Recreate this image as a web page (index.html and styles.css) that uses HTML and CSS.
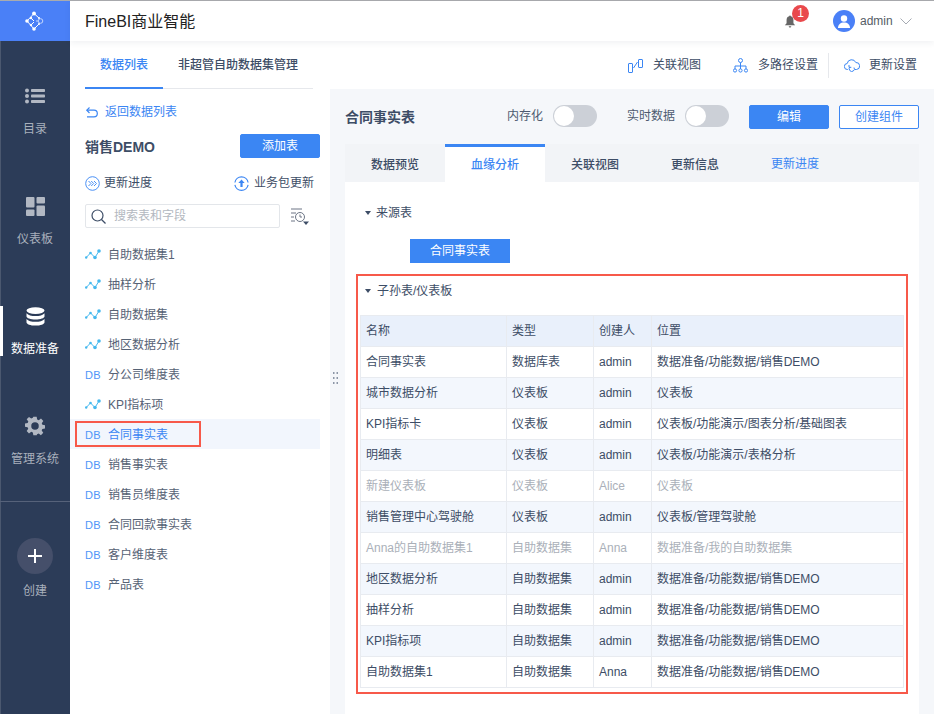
FILE: index.html
```html
<!DOCTYPE html>
<html lang="zh">
<head>
<meta charset="utf-8">
<title>FineBI商业智能</title>
<link rel="stylesheet" href="styles.css">
</head>
<body>
<div class="app">
  <aside class="side">
    <div class="logo">
      <svg width="20" height="20" viewBox="0 0 20 20" fill="none" stroke="#fff" stroke-width="1"><path d="M2 10 9 2.500 14 7M2 10l7 8 5-5M9 10l-3-3M9 11l-3 3"/><circle cx="15.500" cy="10" r="2.300" stroke="#c4d6fc"/><path d="M11 10h2" stroke="#c4d6fc"/><g fill="#fff" stroke="none"><circle cx="2" cy="10" r="1.800"/><circle cx="9" cy="2.500" r="1.900"/><circle cx="9" cy="18" r="1.800"/><circle cx="6" cy="7" r="1.200"/><circle cx="6" cy="14" r="1.200"/><circle cx="14" cy="7" r="1"/><circle cx="14" cy="13" r="1"/></g></svg>
    </div>
    <nav class="nav">
      <a class="nav-item">
        <svg class="m2" width="20" height="16" viewBox="0 0 20 16" fill="#dfe2e7"><circle cx="2" cy="2.500" r="2"/><circle cx="2" cy="8" r="2"/><circle cx="2" cy="13.500" r="2"/><rect x="6" y="1" width="14" height="3" rx=".8"/><rect x="6" y="6.500" width="14" height="3" rx=".8"/><rect x="6" y="12" width="14" height="3" rx=".8"/></svg>
        <span>目录</span>
      </a>
      <a class="nav-item">
        <svg class="m1" width="19" height="19" viewBox="0 0 19 19" fill="#dfe2e7"><rect width="8.500" height="10.500" rx="1"/><rect y="12.500" width="8.500" height="6.500" rx="1"/><rect x="10.500" width="8.500" height="6.500" rx="1"/><rect x="10.500" y="8.500" width="8.500" height="10.500" rx="1"/></svg>
        <span>仪表板</span>
      </a>
      <a class="nav-item active">
        <svg class="m1" width="19" height="19" viewBox="0 0 19 19" fill="#fff"><ellipse cx="9.500" cy="3.600" rx="9" ry="3.400"/><path d="M.5 6.200c1.600 2 5 2.800 9 2.800s7.400-.8 9-2.800v3c0 1.900-4 3.300-9 3.300s-9-1.400-9-3.300z"/><path d="M.5 12c1.600 2 5 2.800 9 2.800s7.400-.8 9-2.800v3.200c0 2-4 3.400-9 3.400s-9-1.400-9-3.400z"/></svg>
        <span>数据准备</span>
      </a>
      <a class="nav-item">
        <svg width="20" height="20" viewBox="0 0 24 24" fill="#dfe2e7"><path fill-rule="evenodd" d="M10 1h4l.6 3.200 1.900.8 2.700-1.900 2.800 2.800-1.900 2.700.8 1.900 3.100.5v4l-3.200.6-.8 1.900 1.900 2.700-2.800 2.800-2.700-1.900-1.900.8L14 23h-4l-.6-3.200-1.900-.8-2.700 1.900L2 18.100l1.900-2.700-.8-1.900L0 13v-4l3.200-.5.800-1.900L2 3.900 4.800 1.100l2.700 1.900 1.900-.8zM12 7.500a4.500 4.500 0 1 0 0 9 4.500 4.500 0 0 0 0-9z"/></svg>
        <span>管理系统</span>
      </a>
    </nav>
    <div class="create">
      <div class="plus"><svg width="14" height="14" viewBox="0 0 14 14" fill="#fff"><rect x="6" width="2" height="14"/><rect y="6" width="14" height="2"/></svg></div>
      <span>创建</span>
    </div>
  </aside>

  <div class="main">
    <header class="top">
      <h1 class="brand">FineBI商业智能</h1>
      <div class="top-right">
        <div class="bell">
          <svg width="12" height="13" viewBox="0 0 14 14" fill="#666"><path d="M7 0c.7 0 1 .5 1 1 2 .5 3 2.200 3 4.300V9l2 2.500H1L3 9V5.300C3 3.200 4 1.500 6 1c0-.5.3-1 1-1zM5.500 12.500h3C8.400 13.400 7.800 14 7 14s-1.400-.6-1.500-1.500z"/></svg>
          <b class="badge">1</b>
        </div>
        <div class="avatar"><svg width="12" height="13" viewBox="0 0 12 13" fill="#fff"><circle cx="6" cy="3.500" r="3.200"/><path d="M0 13c0-3.500 2.500-5.500 6-5.500s6 2 6 5.500z"/></svg></div>
        <span class="uname">admin</span>
        <svg class="chev" width="12" height="7" viewBox="0 0 12 7" fill="none" stroke="#a6abb3"><path d="M.5.500 6 6l5.500-5.500"/></svg>
      </div>
    </header>

    <div class="subbar">
      <div class="subtabs">
        <a class="subtab on">数据列表</a>
        <a class="subtab">非超管自助数据集管理</a>
      </div>
      <div class="tools">
        <a class="tool t1"><svg width="15" height="15" viewBox="0 0 15 15" fill="none" stroke="#3b86f3"><rect x=".5" y="5.500" width="4" height="9" rx=".5"/><rect x="10.500" y="1.500" width="4" height="8" rx=".5"/><path d="M5.500 10 9.500 4"/></svg>关联视图</a>
        <a class="tool t2"><svg width="15" height="15" viewBox="0 0 15 15" fill="none" stroke="#3b86f3"><circle cx="7.500" cy="2.500" r="2"/><circle cx="2" cy="12.500" r="1.600"/><circle cx="7.500" cy="12.500" r="1.600"/><circle cx="13" cy="12.500" r="1.600"/><path d="M7.500 4.500v6.500M2 11V8h11v3"/></svg>多路径设置</a>
        <a class="tool t3"><svg width="16" height="13" viewBox="0 0 16 13" fill="none" stroke="#3b86f3"><path d="M4 10.500H3.500a3 3 0 0 1-.3-6A4.500 4.500 0 0 1 11.800 3.500 3.500 3.500 0 0 1 12.500 10.500H11"/><path d="M10 8.500a2.600 2.600 0 1 1-4-.5M5 6v2.300h2.300"/></svg>更新设置</a>
      </div>
    </div>

    <div class="body">
      <section class="left">
        <a class="back"><svg width="12" height="11" viewBox="0 0 12 11" fill="none" stroke="#3b86f3" stroke-width="1.200"><path d="M.8 3.200H8a3.300 3.300 0 0 1 0 6.600H1"/><path d="M3.500.5.800 3.200 3.500 6"/></svg>返回数据列表</a>
        <div class="pack">
          <h2>销售DEMO</h2>
          <button class="btn solid">添加表</button>
        </div>
        <div class="actions">
          <a class="act progress"><svg width="15" height="15" viewBox="0 0 15 15" fill="none" stroke="#4a90f5"><circle cx="7.500" cy="7.500" r="6.800"/><path d="m3.500 5 2.500 2.500L3.500 10M6.200 5l2.500 2.500L6.200 10M9 5l2.500 2.500L9 10"/></svg>更新进度</a>
          <a class="act"><svg width="15" height="15" viewBox="0 0 15 15" fill="none" stroke="#3b86f3" stroke-width="1.200"><path d="M.9 6.500A6.700 6.700 0 0 1 14.100 6.500M14.100 8.800A6.700 6.700 0 0 1 .9 8.800"/><path d="m7.500 3.500 3.200 3.600H8.600v4H6.400v-4H4.300z" fill="#3b86f3" stroke="none"/></svg>业务包更新</a>
        </div>
        <div class="searchrow">
          <label class="search">
            <svg width="15" height="15" viewBox="0 0 15 15" fill="none" stroke="#3d4d66" stroke-width="1.200"><circle cx="6.500" cy="6.500" r="5.500"/><path d="m10.500 10.500 4 4"/></svg>
            <input type="text" placeholder="搜索表和字段">
          </label>
          <svg class="filter" width="19" height="18" viewBox="0 0 19 18" fill="none" stroke="#6c7585"><path d="M1 2h11M1 6h5M1 10h3M1 14h4"/><circle cx="10" cy="10" r="4.500"/><path d="M10 7.500V10h2"/><path d="M13 14.500h6L16 18z" fill="#3d4d66" stroke="none"/></svg>
        </div>
        <ul class="list">
          <li class="row"><span class="item"><svg class="ic" width="16" height="13" viewBox="0 0 16 13"><path d="M1.200 8.500 5.500 4 10 8.500 14 2" fill="none" stroke="#45b8ee"/><g fill="#45b8ee"><circle cx="1.200" cy="8.500" r="1.200"/><circle cx="5.500" cy="4" r="1.300"/><circle cx="10" cy="8.500" r="1.800"/><circle cx="14" cy="2" r="1.800"/></g></svg>自助数据集1</span></li>
          <li class="row"><span class="item"><svg class="ic" width="16" height="13" viewBox="0 0 16 13"><path d="M1.200 8.500 5.500 4 10 8.500 14 2" fill="none" stroke="#45b8ee"/><g fill="#45b8ee"><circle cx="1.200" cy="8.500" r="1.200"/><circle cx="5.500" cy="4" r="1.300"/><circle cx="10" cy="8.500" r="1.800"/><circle cx="14" cy="2" r="1.800"/></g></svg>抽样分析</span></li>
          <li class="row"><span class="item"><svg class="ic" width="16" height="13" viewBox="0 0 16 13"><path d="M1.200 8.500 5.500 4 10 8.500 14 2" fill="none" stroke="#45b8ee"/><g fill="#45b8ee"><circle cx="1.200" cy="8.500" r="1.200"/><circle cx="5.500" cy="4" r="1.300"/><circle cx="10" cy="8.500" r="1.800"/><circle cx="14" cy="2" r="1.800"/></g></svg>自助数据集</span></li>
          <li class="row"><span class="item"><svg class="ic" width="16" height="13" viewBox="0 0 16 13"><path d="M1.200 8.500 5.500 4 10 8.500 14 2" fill="none" stroke="#45b8ee"/><g fill="#45b8ee"><circle cx="1.200" cy="8.500" r="1.200"/><circle cx="5.500" cy="4" r="1.300"/><circle cx="10" cy="8.500" r="1.800"/><circle cx="14" cy="2" r="1.800"/></g></svg>地区数据分析</span></li>
          <li class="row"><span class="item"><i class="db">DB</i>分公司维度表</span></li>
          <li class="row"><span class="item"><svg class="ic" width="16" height="13" viewBox="0 0 16 13"><path d="M1.200 8.500 5.500 4 10 8.500 14 2" fill="none" stroke="#45b8ee"/><g fill="#45b8ee"><circle cx="1.200" cy="8.500" r="1.200"/><circle cx="5.500" cy="4" r="1.300"/><circle cx="10" cy="8.500" r="1.800"/><circle cx="14" cy="2" r="1.800"/></g></svg>KPI指标项</span></li>
          <li class="row sel"><span class="item"><i class="db">DB</i>合同事实表</span></li>
          <li class="row"><span class="item"><i class="db">DB</i>销售事实表</span></li>
          <li class="row"><span class="item"><i class="db">DB</i>销售员维度表</span></li>
          <li class="row"><span class="item"><i class="db">DB</i>合同回款事实表</span></li>
          <li class="row"><span class="item"><i class="db">DB</i>客户维度表</span></li>
          <li class="row"><span class="item"><i class="db">DB</i>产品表</span></li>
        </ul>
      </section>

      <section class="right">
        <svg class="grip" width="5" height="12" viewBox="0 0 5 12" fill="#8d97a7"><rect width="1.500" height="2"/><rect y="5" width="1.500" height="2"/><rect y="10" width="1.500" height="2"/><rect x="3.500" width="1.500" height="2"/><rect x="3.500" y="5" width="1.500" height="2"/><rect x="3.500" y="10" width="1.500" height="2"/></svg>
        <div class="head">
          <h2>合同事实表</h2>
          <div class="head-ctl">
            <span class="sw-label">内存化</span><span class="switch"></span>
            <span class="sw-label second">实时数据</span><span class="switch"></span>
            <button class="btn solid edit">编辑</button>
            <button class="btn ghost">创建组件</button>
          </div>
        </div>
        <div class="tabs">
          <a class="tab">数据预览</a>
          <a class="tab on">血缘分析</a>
          <a class="tab">关联视图</a>
          <a class="tab">更新信息</a>
          <a class="tab link">更新进度</a>
        </div>
        <div class="panel">
          <div class="sec src"><i class="tri"></i>来源表</div>
          <div class="node">合同事实表</div>
          <div class="redbox">
            <div class="sec kids"><i class="tri"></i>子孙表/仪表板</div>
            <table class="grid">
              <colgroup><col class="c1"><col class="c2"><col class="c3"><col class="c4"></colgroup>
              <thead><tr><th>名称</th><th>类型</th><th>创建人</th><th>位置</th></tr></thead>
              <tbody>
                <tr><td>合同事实表</td><td>数据库表</td><td>admin</td><td>数据准备/功能数据/销售DEMO</td></tr>
                <tr><td>城市数据分析</td><td>仪表板</td><td>admin</td><td>仪表板</td></tr>
                <tr><td>KPI指标卡</td><td>仪表板</td><td>admin</td><td>仪表板/功能演示/图表分析/基础图表</td></tr>
                <tr><td>明细表</td><td>仪表板</td><td>admin</td><td>仪表板/功能演示/表格分析</td></tr>
                <tr class="dim"><td>新建仪表板</td><td>仪表板</td><td>Alice</td><td>仪表板</td></tr>
                <tr><td>销售管理中心驾驶舱</td><td>仪表板</td><td>admin</td><td>仪表板/管理驾驶舱</td></tr>
                <tr class="dim"><td>Anna的自助数据集1</td><td>自助数据集</td><td>Anna</td><td>数据准备/我的自助数据集</td></tr>
                <tr><td>地区数据分析</td><td>自助数据集</td><td>admin</td><td>数据准备/功能数据/销售DEMO</td></tr>
                <tr><td>抽样分析</td><td>自助数据集</td><td>admin</td><td>数据准备/功能数据/销售DEMO</td></tr>
                <tr><td>KPI指标项</td><td>自助数据集</td><td>admin</td><td>数据准备/功能数据/销售DEMO</td></tr>
                <tr><td>自助数据集1</td><td>自助数据集</td><td>Anna</td><td>数据准备/功能数据/销售DEMO</td></tr>
              </tbody>
            </table>
          </div>
        </div>
      </section>
    </div>
  </div>
</div>
</body>
</html>
```

FILE: styles.css
```css
* { box-sizing: border-box; }
html, body { margin: 0; height: 100%; overflow: hidden; }
body {
  font: 12px/1.5 "Liberation Sans", "Noto Sans CJK SC", sans-serif;
  color: #3d4d66;
  background: #fff;
}
h1, h2, ul { margin: 0; padding: 0; }
ul { list-style: none; }
i { font-style: normal; }
svg { display: block; flex: none; }

.app { display: flex; height: 714px; border-top: 1px solid #a9abae; }

/* sidebar */
.side { width: 70px; flex: none; background: #2c3c58; color: #a9b0bc; border-left: 1px solid #4b586f; }
.logo { height: 40px; margin-left: -1px; background: #4a80f7; display: flex; align-items: center; justify-content: center; }
.nav { padding-top: 45px; display: flex; flex-direction: column; gap: 60px; padding-bottom: 35px; border-bottom: 1px solid #56627a; margin-left: -1px; }
.nav-item { height: 50px; display: flex; flex-direction: column; align-items: center; line-height: 18px; border-left: 3px solid transparent; padding-right: 3px; }
.nav-item svg { opacity: .75; }
.nav-item .m2 { margin-top: 2px; }
.nav-item .m1 { margin-top: 1px; }
.nav-item span { margin-top: auto; margin-bottom: -2px; }
.nav-item.active { color: #fff; border-left-color: #fff; }
.nav-item.active svg { opacity: 1; }
.create { display: flex; flex-direction: column; align-items: center; padding-top: 36px; margin-left: -1px; }
.plus { width: 36px; height: 36px; border-radius: 50%; background: #454f6a; display: flex; align-items: center; justify-content: center; }
.create span { margin-top: 8px; line-height: 18px; }

/* main */
.main { flex: 1; min-width: 0; display: flex; flex-direction: column; }
.top { height: 40px; flex: none; display: flex; justify-content: space-between; align-items: center; padding: 0 22px 0 15px; box-shadow: 0 2px 6px rgba(40, 60, 90, .07); position: relative; }
.brand { font-size: 16px; font-weight: 400; color: #222; padding-top: 2px; }
.top-right { display: flex; align-items: center; }
.bell { position: relative; margin-right: 37px; }
.badge { position: absolute; left: 8px; top: -10px; width: 17px; height: 17px; border-radius: 50%; background: #e9494c; color: #fff; font-weight: 400; font-size: 12px; line-height: 17px; text-align: center; }
.avatar { width: 22px; height: 22px; border-radius: 50%; background: #4a80f7; display: flex; align-items: center; justify-content: center; }
.uname { width: 31px; margin: 0 9px 0 5px; color: #555c66; white-space: nowrap; }

.subbar { height: 48px; flex: none; display: flex; justify-content: space-between; padding: 0 17px 0 15px; background: #fff; }
.subtabs { width: 228px; height: 48px; display: flex; border-bottom: 1px solid #e6e8ec; font-weight: 500; }
.subtab { line-height: 48px; height: 48px; }
.subtab.on { width: 78px; text-align: center; color: #3b86f3; border-bottom: 2px solid #3b86f3; margin-right: 15px; }
.tools { display: flex; height: 48px; align-items: center; }
.tool { display: flex; align-items: center; gap: 10px; height: 25px; }
.t1 { margin-right: 32px; }
.t2 { padding-right: 10px; margin-right: 15px; border-right: 1px solid #e6e8ec; }
.t3 { gap: 9px; }

/* body */
.body { flex: 1; display: flex; min-height: 0; }
.left { width: 260px; flex: none; padding-top: 14px; background: #fff; }
.back { display: flex; align-items: center; gap: 7px; color: #3b86f3; margin-left: 16px; height: 18px; }
.pack { display: flex; justify-content: space-between; align-items: center; margin: 13px 10px 0 15px; height: 24px; }
.pack h2 { font-size: 14px; font-weight: 700; padding-top: 2px; }
.btn { font: inherit; width: 80px; height: 24px; border-radius: 2px; padding: 0; border: 1px solid #3b86f3; }
.solid { background: #3b86f3; color: #fff; }
.ghost { background: #fff; color: #3b86f3; margin-left: 10px; }
.actions { display: flex; justify-content: space-between; align-items: center; margin: 16px 16px 0 15px; height: 18px; }
.act { display: flex; align-items: center; gap: 5px; }
.progress { gap: 4px; }
.searchrow { display: flex; align-items: center; margin: 12px 0 0 15px; gap: 10px; }
.search { width: 195px; height: 24px; border: 1px solid #e3e6ea; border-radius: 2px; display: flex; align-items: center; padding-left: 5px; gap: 8px; }
.search input { font: inherit; border: 0; padding: 0; outline: 0; width: 150px; color: #3d4d66; background: none; }
.search input::placeholder { color: #b3b8c0; opacity: 1; }
.list { margin-top: 11px; width: 250px; }
.row { height: 30px; display: flex; align-items: center; padding-left: 5px; }
.item { display: flex; align-items: center; height: 26px; padding: 2px 0 0 10px; width: 126px; color: #566275; white-space: nowrap; }
.row.sel { background: #f2f6fd; }
.sel .item { border: 2px solid #f7594a; padding: 2px 0 0 8px; color: #3b86f3; }
.ic { margin-right: 7px; }
.db { width: 23px; font-size: 11px; font-weight: 400; line-height: 14px; color: #4f95f8; letter-spacing: .3px; }

/* right */
.right { flex: 1; min-width: 0; background: #f5f7fa; padding: 0 15px; position: relative; display: flex; flex-direction: column; }
.grip { position: absolute; left: 3px; top: 283px; }
.head { height: 55px; flex: none; display: flex; justify-content: space-between; align-items: flex-start; padding-top: 16px; }
.head h2 { font-size: 14px; font-weight: 700; line-height: 25px; }
.head-ctl { display: flex; align-items: flex-start; }
.sw-label { margin-right: 10px; color: #4d5a70; line-height: 23px; }
.second { margin-left: 30px; }
.switch { width: 44px; height: 22px; border-radius: 11px; background: #ccd0d7; position: relative; }
.switch::after { content: ""; position: absolute; left: 1px; top: 1px; width: 20px; height: 20px; border-radius: 50%; background: #fff; }
.edit { margin-left: 20px; }
.tabs { height: 38px; flex: none; display: flex; background: #f2f4f7; font-weight: 500; }
.tab { width: 100px; text-align: center; line-height: 42px; }
.tab.on { background: #fff; color: #3b86f3; border-top: 3px solid #3b86f3; line-height: 37px; }
.tab.link { color: #3b86f3; font-weight: 400; line-height: 41px; }
.panel { flex: 1; min-height: 0; background: #fff; padding: 22px 11px 0; }
.sec { display: flex; align-items: center; height: 18px; }
.tri { width: 0; height: 0; border: 3px solid transparent; border-top: 4px solid #3d4d66; border-bottom: 0; margin-right: 5px; }
.src { padding-left: 9px; }
.node { width: 100px; height: 24px; margin: 17px 0 11px 54px; background: #3b86f3; color: #fff; text-align: center; line-height: 24px; }
.redbox { width: 552px; height: 420px; border: 2px solid #f7594a; padding: 6px 2px 0; }
.kids { padding-left: 5px; height: 18px; }
.kids .tri { margin-right: 6px; }
.grid { margin-top: 15px; width: 543px; border-collapse: collapse; table-layout: fixed; }
.c1 { width: 146px; } .c2 { width: 87px; } .c3 { width: 58px; } .c4 { width: 252px; }
.grid th, .grid td { height: 31px; padding: 0 5px; border: 1px solid #e8ebf0; font-weight: 400; text-align: left; white-space: nowrap; overflow: hidden; }
.grid th { background: #e9f0fb; }
.grid tbody tr:nth-child(even) { background: #f3f7fd; }
.dim td { color: #aab0b9; }
```
